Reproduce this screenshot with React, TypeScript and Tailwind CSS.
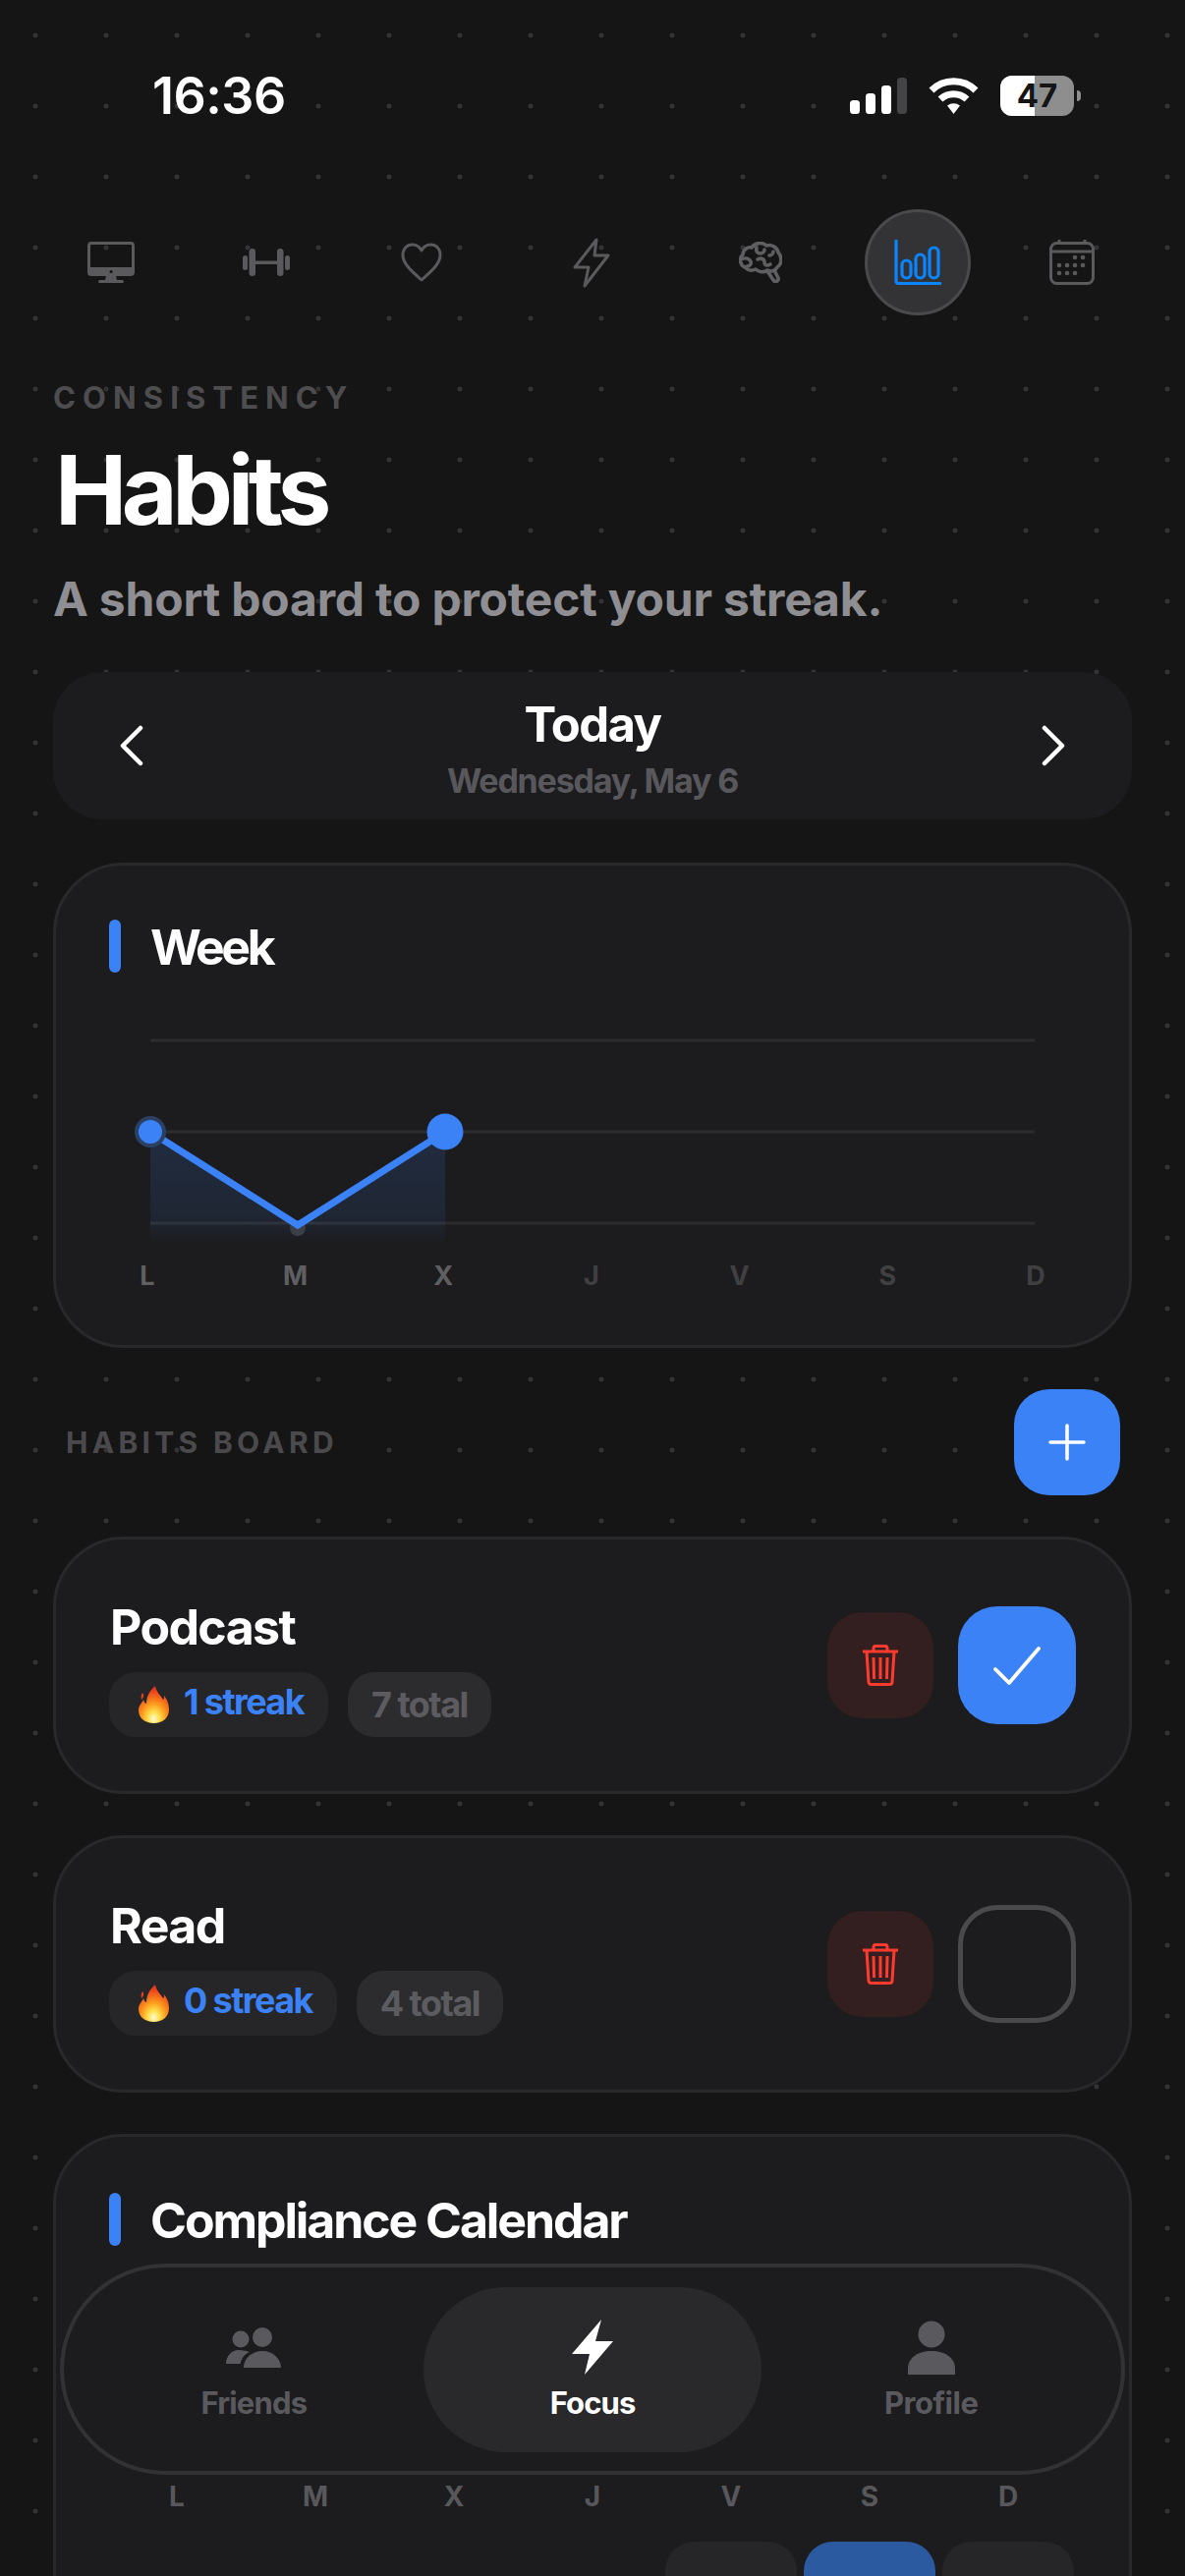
import React from 'react';

const dayLabels = ['L', 'M', 'X', 'J', 'V', 'S', 'D'];

const MonitorIcon = () => (
    <svg width="48" height="42" viewBox="0 0 48 42" fill="none">
        <path fillRule="evenodd" d="M4 0h40a4 4 0 0 1 4 4v27a4 4 0 0 1-4 4H4a4 4 0 0 1-4-4V4a4 4 0 0 1 4-4Zm0 3a1 1 0 0 0-1 1v22h42V4a1 1 0 0 0-1-1H4Z" fill="#5a5a5c" />
        <circle cx="24" cy="30.5" r="1.6" fill="#151515" />
        <path d="M19 35h10l1 4H18Z" fill="#5a5a5c" />
        <rect x="11" y="39" width="26" height="3" rx="1.5" fill="#5a5a5c" />
    </svg>
);

const DumbbellIcon = () => (
    <svg width="48" height="28" viewBox="0 0 48 28" fill="#5a5a5c">
        <rect x="0" y="7" width="5" height="15" rx="2.5" />
        <rect x="6.5" y="0" width="6.5" height="28" rx="3.2" />
        <rect x="13" y="12.5" width="22" height="3.5" />
        <rect x="35" y="0" width="6.5" height="28" rx="3.2" />
        <rect x="43" y="7" width="5" height="15" rx="2.5" />
    </svg>
);

const HeartIcon = () => (
    <svg width="42" height="40" viewBox="0 0 42 40" fill="none" stroke="#5a5a5c" strokeWidth="3" strokeLinejoin="round">
        <path d="M21 38C12 30 2 22 2 12.5 2 6 6.5 2 11.5 2 15.500 2 19 4 21 8c2-4 5.500-6 9.500-6C35.500 2 40 6 40 12.500 40 22 30 30 21 38Z" />
    </svg>
);

const BoltOutlineIcon = () => (
    <svg width="38" height="52" viewBox="0 0 38 52" fill="none" stroke="#5a5a5c" strokeWidth="3" strokeLinejoin="round">
        <path d="M24 3 2 31h14l-4 19 24-31H22Z" />
    </svg>
);

const BrainIcon = () => (
    <svg width="44" height="42" viewBox="0 0 44 42" fill="none" stroke="#5f5f61" strokeWidth="3.6" strokeLinecap="round" strokeLinejoin="round">
        <path d="M6 26C1 24 0 17 4 13 4 8 9 5 13 6 16 1 24 0 28 4 33 2 39 6 40 11 44 15 44 23 39 26 37 30 32 31 29 29 25 32 20 31 17 28 13 30 9 29 6 26Z" />
        <path d="M2 18C6 16 10 17 12 20 13 23 11 25 8 25" />
        <path d="M18 6C17 10 19 12 22 12 24 12 26 10 26 8" />
        <path d="M19 18C23 16 26 18 26 21 26 24 29 25 32 23" />
        <path d="M31 14C33 14 35 12 35 10" />
        <path d="M29 30 35 39C37 42 41 40 40 37L36 29" />
    </svg>
);

const ChartIcon = () => (
    <svg width="48" height="48" viewBox="0 0 48 48" fill="none" stroke="#0a84ff" strokeWidth="3.2" strokeLinecap="round">
        <path d="M2 2v41a2.500 2.500 0 0 0 2.500 2.500H47" />
        <rect x="8" y="22" width="9" height="18" rx="4.500" />
        <rect x="22" y="16" width="9" height="24" rx="4.500" />
        <rect x="36" y="9" width="9" height="31" rx="4.500" />
    </svg>
);

const CalendarIcon = () => (
    <svg width="46" height="46" viewBox="0 0 46 46" fill="none">
        <rect x="1.500" y="3.500" width="43" height="41" rx="6" stroke="#5a5a5c" strokeWidth="3" />
        <path d="M1.500 12h43" stroke="#5a5a5c" strokeWidth="3" />
        <path d="M10 0v4M36 0v4" stroke="#5a5a5c" strokeWidth="3" />
        <g fill="#5a5a5c">
            <circle cx="26" cy="18" r="2.300" /><circle cx="34" cy="18" r="2.300" />
            <circle cx="10" cy="26" r="2.300" /><circle cx="18" cy="26" r="2.300" /><circle cx="26" cy="26" r="2.300" /><circle cx="34" cy="26" r="2.300" />
            <circle cx="10" cy="34" r="2.300" /><circle cx="18" cy="34" r="2.300" /><circle cx="26" cy="34" r="2.300" />
        </g>
    </svg>
);

const TrashIcon = () => (
    <svg width="36" height="42" viewBox="0 0 36 42" fill="none" stroke="#ff3b30" strokeWidth="3">
        <path d="M0 7h36" />
        <path d="M11 7V3.500A2 2 0 0 1 13 1.500h10a2 2 0 0 1 2 2V7" />
        <path d="M4 7l2 31a2.500 2.500 0 0 0 2.500 2.500h19A2.500 2.500 0 0 0 30 38l2-31" />
        <path d="M11 13l.5 22M18 13v22M25 13l-.5 22" />
    </svg>
);

const FlameIcon = ({ id }: { id: string }) => (
    <svg width="31" height="38" viewBox="0 0 31 38">
        <defs>
            <radialGradient id={id} cx="0.5" cy="0.88" r="0.9">
                <stop offset="0" stopColor="#fffbe0" />
                <stop offset="0.2" stopColor="#ffe14d" />
                <stop offset="0.45" stopColor="#fb9a1c" />
                <stop offset="0.78" stopColor="#f0491c" />
                <stop offset="1" stopColor="#d92a16" />
            </radialGradient>
        </defs>
        <path d="M17 0C18 6 22 9 25 14 26 13 26 12 26 10 30 15 31 20 31 24 31 33 24 38 15.500 38 7 38 0 33 0 25 0 20 3 18 5 14 6 17 7 18 8 18 8 11 11 5 17 0Z" fill={`url(#${id})`} />
        <path d="M4 7C3 9 2 11 3 14 5 12 6 9 4 7Z" fill="#e8431c" />
    </svg>
);

const tabs = [
    { icon: <MonitorIcon />, cell: 'w-[158px]' },
    { icon: <DumbbellIcon />, cell: 'w-[158px]' },
    { icon: <HeartIcon />, cell: 'w-[158px]' },
    { icon: <BoltOutlineIcon />, cell: 'w-[188px]' },
    { icon: <BrainIcon />, cell: 'w-[156px]' },
    { icon: <ChartIcon />, cell: 'w-[164px]', active: true },
    { icon: <CalendarIcon />, cell: 'w-[150px]' },
];

const SectionTitle = ({ title, tight }: { title: string; tight?: boolean }) => (
    <div className="flex items-center gap-[30px] h-[54px]">
        <div className="w-[12px] h-[54px] rounded-full bg-[#3b82f6]" />
        <h2 className={`pt-[2px] text-[50px] leading-[54px] font-bold text-white ${tight ? 'tracking-[-3.4px]' : 'tracking-[-2.1px]'}`}>{title}</h2>
    </div>
);

const HabitCard = ({ name, streak, total, done }: { name: string; streak: number; total: number; done?: boolean }) => (
    <div className="h-[262px] rounded-[72px] border-[3px] border-[#29292b] bg-[#1c1c1e] pl-[54px] pr-[54px] flex items-center justify-between">
        <div className="flex flex-col pt-[6px]">
            <div className="text-[50px] leading-[56px] font-bold text-white tracking-[-1.6px] pl-[1px]">{name}</div>
            <div className="flex gap-[20px] mt-[18px]">
                <div className="h-[66px] rounded-[27px] bg-[#262628] pl-[30px] pr-[25px] flex items-center gap-[15px]">
                    <FlameIcon id={`flame-${name}`} />
                    <span className="text-[36px] leading-[44px] font-bold text-[#3b82f6] tracking-[-1.6px] pb-[6px]">{streak} streak</span>
                </div>
                <div className="h-[66px] rounded-[27px] bg-[#2c2c2e] px-[24px] flex items-center">
                    <span className="text-[36px] leading-[44px] font-bold text-[#5c5c60] tracking-[-1.5px]">{total} total</span>
                </div>
            </div>
        </div>
        <div className="flex items-center gap-[25px]">
            <button className="w-[108px] h-[108px] rounded-[36px] bg-[#331f1f] flex items-center justify-center">
                <TrashIcon />
            </button>
            {done ? (
                <button className="w-[120px] h-[120px] rounded-[40px] bg-[#3b82f6] flex items-center justify-center">
                    <svg width="48" height="40" viewBox="0 0 48 40" fill="none" stroke="white" strokeWidth="3.800" strokeLinecap="round" strokeLinejoin="round">
                        <path d="M2 24l14 14L46 3" />
                    </svg>
                </button>
            ) : (
                <button className="w-[120px] h-[120px] rounded-[40px] border-[5px] border-[#4a4a4c]" />
            )}
        </div>
    </div>
);

export default function App() {
    return (
        <div className="relative w-[1206px] h-[2622px] overflow-hidden bg-[#151515] bg-[radial-gradient(circle,#333335_2.2px,transparent_2.8px)] bg-[size:72px_72px] font-['Inter',sans-serif]">
            {/* Status bar */}
            <div className="h-[213px] pt-[70px] pl-[155px] pr-[106px] flex items-start justify-between">
                <span className="text-[52px] leading-[56px] font-semibold text-white tracking-[-0.5px]">16:36</span>
                <div className="flex items-start pt-[7px]">
                    <svg width="58" height="37" viewBox="0 0 58 37" className="mt-[2px]">
                        <rect x="0" y="23" width="10" height="14" rx="3.500" fill="white" />
                        <rect x="16" y="16" width="10" height="21" rx="3.500" fill="white" />
                        <rect x="32" y="8" width="10" height="29" rx="3.500" fill="white" />
                        <rect x="48" y="0" width="10" height="37" rx="3.500" fill="#444446" />
                    </svg>
                    <svg width="51" height="37" viewBox="0 0 51 37" fill="none" stroke="white" strokeWidth="7" className="ml-[22px] mt-[2px]">
                        <path d="M3 13a32 32 0 0 1 45 0" />
                        <path d="M12 22a20 20 0 0 1 27 0" />
                        <path d="M19 28.500l6.500 8.500 6.500-8.500a11 11 0 0 0-13 0Z" fill="white" stroke="none" />
                    </svg>
                    <div className="relative ml-[22px] w-[75px] h-[41px] rounded-[12px] overflow-hidden bg-[#8e8e8e] flex items-center justify-center">
                        <div className="absolute inset-y-0 left-0 w-[35px] bg-white" />
                        <span className="relative text-[33px] leading-[41px] font-bold text-[#151515]">47</span>
                    </div>
                    <div className="mt-[15px] ml-[3px] w-[4px] h-[11px] rounded-r-full bg-[#8e8e8e]" />
                </div>
            </div>

            {/* Category tabs */}
            <div className="h-[108px] pl-[34px] flex items-center">
                {tabs.map((tab, i) => (
                    <div key={i} className={`${tab.cell} flex justify-center`}>
                        {tab.active ? (
                            <div className="w-[108px] h-[108px] shrink-0 rounded-full bg-[#333335] border-[3px] border-[#4a4a4c] flex items-center justify-center">
                                {tab.icon}
                            </div>
                        ) : tab.icon}
                    </div>
                ))}
            </div>

            <div className="px-[54px]">
                <div className="mt-[64px] text-[31px] leading-[40px] font-bold text-[#4d4d4f] tracking-[7.1px]">CONSISTENCY</div>
                <h1 className="mt-[19px] text-[98px] leading-[110px] font-bold text-white tracking-[-5.4px] pl-[2px]">Habits</h1>
                <p className="mt-[26px] text-[48px] leading-[60px] font-bold text-[#8e8e93] tracking-[-0.2px]">A short board to protect your streak.</p>

                {/* Date switcher */}
                <div className="mt-[44px] h-[150px] rounded-[50px] bg-[#1c1c1e] px-[68px] flex items-center justify-between">
                    <svg width="24" height="42" viewBox="0 0 24 42" fill="none" stroke="white" strokeWidth="4.500" strokeLinecap="round" strokeLinejoin="round">
                        <path d="M21 3 3 21l18 18" />
                    </svg>
                    <div className="flex flex-col items-center pt-[7px]">
                        <div className="text-[49px] leading-[58px] font-bold text-white tracking-[-1.6px]">Today</div>
                        <div className="mt-[7px] text-[34px] leading-[42px] font-bold text-[#58585c] tracking-[-1.2px]">Wednesday, May 6</div>
                    </div>
                    <svg width="24" height="42" viewBox="0 0 24 42" fill="none" stroke="white" strokeWidth="4.500" strokeLinecap="round" strokeLinejoin="round">
                        <path d="m3 3 18 18L3 39" />
                    </svg>
                </div>

                {/* Week chart */}
                <div className="mt-[44px] h-[494px] rounded-[72px] border-[3px] border-[#29292b] bg-[#1c1c1e] pt-[55px] px-[54px]">
                    <SectionTitle title="Week" tight />
                    <svg width="1020" height="250" viewBox="0 0 1020 250" className="mt-[40px] overflow-visible">
                        <defs>
                            <linearGradient id="weekFill" x1="0" y1="0" x2="0" y2="1">
                                <stop offset="0" stopColor="#3b82f6" stopOpacity="0.16" />
                                <stop offset="0.75" stopColor="#3b82f6" stopOpacity="0.1" />
                                <stop offset="1" stopColor="#3b82f6" stopOpacity="0" />
                            </linearGradient>
                        </defs>
                        <path d="M42 29h900M42 122h900M42 215h900" stroke="#2c2c2e" strokeWidth="3" />
                        <path d="M42 122 192 217 342 122V236H42Z" fill="url(#weekFill)" />
                        <circle cx="192" cy="220" r="8" fill="#3b3f47" />
                        <path d="M42 122 192 217 342 122" fill="none" stroke="#3b82f6" strokeWidth="7" strokeLinejoin="miter" />
                        <circle cx="42" cy="122" r="16" fill="#2c4064" />
                        <circle cx="42" cy="122" r="12" fill="#3b82f6" />
                        <circle cx="342" cy="122" r="18.500" fill="#3b82f6" />
                    </svg>
                    <div className="mt-[4px] ml-[24px] w-[934px] flex justify-between text-[27px] leading-[30px] font-bold">
                        {dayLabels.map((d, i) => (
                            <span key={d} className={`w-[30px] text-center ${i < 3 ? 'text-[#5f5f61]' : 'text-[#404042]'}`}>{d}</span>
                        ))}
                    </div>
                </div>

                {/* Board header */}
                <div className="mt-[42px] h-[108px] flex items-center justify-between pl-[13px] pr-[12px]">
                    <span className="text-[30px] leading-[40px] font-bold text-[#4a4a4c] tracking-[4.3px]">HABITS BOARD</span>
                    <button className="w-[108px] h-[108px] rounded-[36px] bg-[#3b82f6] flex items-center justify-center">
                        <svg width="38" height="38" viewBox="0 0 38 38" fill="none" stroke="white" strokeWidth="3.500" strokeLinecap="round">
                            <path d="M19 2v34M2 19h34" />
                        </svg>
                    </button>
                </div>

                <div className="mt-[42px] flex flex-col gap-[42px]">
                    <HabitCard name="Podcast" streak={1} total={7} done />
                    <HabitCard name="Read" streak={0} total={4} />

                    {/* Compliance calendar */}
                    <div className="h-[700px] rounded-[72px] border-[3px] border-[#29292b] bg-[#1c1c1e] pt-[57px] px-[54px]">
                        <SectionTitle title="Compliance Calendar" />
                        <div className="mt-[240px] ml-[2px] grid grid-cols-7 gap-x-[7px] w-[980px]">
                            {dayLabels.map(d => (
                                <span key={d} className="text-center text-[28px] leading-[30px] font-bold text-[#58585c]">{d}</span>
                            ))}
                            <div className="col-span-4" />
                            <div className="mt-[31px] h-[134px] rounded-[30px] bg-[#262628]" />
                            <div className="mt-[31px] h-[134px] rounded-[30px] bg-[#2c5aa0]" />
                            <div className="mt-[31px] h-[134px] rounded-[30px] bg-[#262628]" />
                        </div>
                    </div>
                </div>
            </div>

            {/* Bottom nav */}
            <div className="absolute left-[61px] right-[61px] bottom-[103px] h-[215px] rounded-full border-[4px] border-[#323234] bg-[#1c1c1e] px-[21px] flex items-center">
                <div className="flex-1 h-[168px] flex flex-col items-center justify-center pt-[4px]">
                    <svg width="56" height="56" viewBox="0 0 56 56" fill="#5a5a5e">
                        <circle cx="37" cy="18" r="10" />
                        <circle cx="15" cy="20" r="8.500" />
                        <path d="M18 49c0-9 8-17 19-17s19 8 19 17Z" />
                        <path d="M0 45c0-8 6-14 13-14 4 0 8 1 11 2-5 2-8 6-9.500 12Z" />
                    </svg>
                    <span className="mt-[9px] text-[31px] leading-[40px] font-bold text-[#5a5a5e] tracking-[-0.8px]">Friends</span>
                </div>
                <div className="flex-1 h-[168px] rounded-full bg-[#29292b] flex flex-col items-center justify-center pt-[4px]">
                    <svg width="42" height="56" viewBox="0 0 42 56" fill="white">
                        <path d="M30 0 0 35h18l-5 21 29-34H24Z" />
                    </svg>
                    <span className="mt-[9px] text-[31px] leading-[40px] font-bold text-white tracking-[-0.9px]">Focus</span>
                </div>
                <div className="flex-1 h-[168px] flex flex-col items-center justify-center pt-[4px]">
                    <svg width="50" height="56" viewBox="0 0 50 56" fill="#5a5a5e">
                        <circle cx="25" cy="15" r="13.500" />
                        <path d="M1 56v-6c0-11 10-18 24-18s24 7 24 18v6Z" />
                    </svg>
                    <span className="mt-[9px] text-[31px] leading-[40px] font-bold text-[#5a5a5e] tracking-[-0.5px]">Profile</span>
                </div>
            </div>
        </div>
    );
}
